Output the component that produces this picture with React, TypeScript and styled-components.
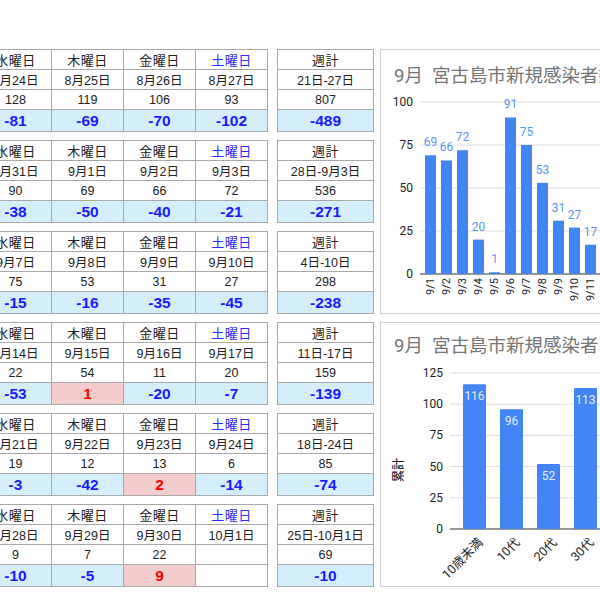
import React from "react";
import styled, { createGlobalStyle } from "styled-components";

type Tone = "neg" | "pos" | "empty";

interface Day {
  date: string;
  count: string;
  diff: string;
  tone: Tone;
}

interface Week {
  days: Day[];
  range: string;
  total: string;
  diff: string;
}

const DAY_NAMES = ["水曜日", "木曜日", "金曜日", "土曜日"];

const d = (date: string, count: string, diff: string, tone: Tone = "neg"): Day => ({
  date,
  count,
  diff,
  tone,
});

const WEEKS: Week[] = [
  {
    days: [d("8月24日", "128", "-81"), d("8月25日", "119", "-69"), d("8月26日", "106", "-70"), d("8月27日", "93", "-102")],
    range: "21日-27日",
    total: "807",
    diff: "-489",
  },
  {
    days: [d("8月31日", "90", "-38"), d("9月1日", "69", "-50"), d("9月2日", "66", "-40"), d("9月3日", "72", "-21")],
    range: "28日-9月3日",
    total: "536",
    diff: "-271",
  },
  {
    days: [d("9月7日", "75", "-15"), d("9月8日", "53", "-16"), d("9月9日", "31", "-35"), d("9月10日", "27", "-45")],
    range: "4日-10日",
    total: "298",
    diff: "-238",
  },
  {
    days: [d("9月14日", "22", "-53"), d("9月15日", "54", "1", "pos"), d("9月16日", "11", "-20"), d("9月17日", "20", "-7")],
    range: "11日-17日",
    total: "159",
    diff: "-139",
  },
  {
    days: [d("9月21日", "19", "-3"), d("9月22日", "12", "-42"), d("9月23日", "13", "2", "pos"), d("9月24日", "6", "-14")],
    range: "18日-24日",
    total: "85",
    diff: "-74",
  },
  {
    days: [d("9月28日", "9", "-10"), d("9月29日", "7", "-5"), d("9月30日", "22", "9", "pos"), d("10月1日", "", "", "empty")],
    range: "25日-10月1日",
    total: "69",
    diff: "-10",
  },
];

// 9月 日別
const DAILY = [69, 66, 72, 20, 1, 91, 75, 53, 31, 27, 17, 30, 22, 54];
// 年代別 累計
const AGES = [
  { label: "10歳未満", value: 116 },
  { label: "10代", value: 96 },
  { label: "20代", value: 52 },
  { label: "30代", value: 113 },
];

const DailyChart = () => {
  const zero = 188;
  const scale = 1.72;
  return (
    <ChartSvg width={260} height={227}>
      {[0, 25, 50, 75, 100].map((t) => (
        <g key={t}>
          <line
            x1={39}
            x2={260}
            y1={zero - t * scale}
            y2={zero - t * scale}
            stroke={t === 0 ? "#333" : "#dcdcdc"}
            strokeWidth={1}
          />
          <AxisText x={32} y={zero - t * scale} textAnchor="end" dominantBaseline="central">
            {t}
          </AxisText>
        </g>
      ))}
      {DAILY.map((v, i) => {
        const x = 44 + i * 16;
        const top = zero - v * scale;
        return (
          <g key={i}>
            <rect x={x} y={top} width={11} height={v * scale} fill="#4285f4" />
            <BarLabel x={x + 5.5} y={top - 13} textAnchor="middle" dominantBaseline="central">
              {v}
            </BarLabel>
            <TickText
              x={x + 5.5}
              y={zero + 4}
              textAnchor="end"
              dominantBaseline="central"
              transform={`rotate(-90 ${x + 5.5} ${zero + 4})`}
            >
              {`9/${i + 1}`}
            </TickText>
          </g>
        );
      })}
    </ChartSvg>
  );
};

const AgeChart = () => {
  const zero = 170;
  const scale = 1.248;
  return (
    <ChartSvg width={260} height={227}>
      <AxisTitle x={18} y={111} textAnchor="middle" dominantBaseline="central" transform="rotate(-90 18 111)">
        累計
      </AxisTitle>
      {[0, 25, 50, 75, 100, 125].map((t) => (
        <g key={t}>
          <line
            x1={69}
            x2={260}
            y1={zero - t * scale}
            y2={zero - t * scale}
            stroke={t === 0 ? "#333" : "#dcdcdc"}
            strokeWidth={1}
          />
          <AxisText x={62} y={zero - t * scale} textAnchor="end" dominantBaseline="central">
            {t}
          </AxisText>
        </g>
      ))}
      {AGES.map((a, i) => {
        const x = 82 + i * 37;
        const top = zero - a.value * scale;
        const cx = x + 11.5;
        return (
          <g key={a.label}>
            <rect x={x} y={top} width={23} height={a.value * scale} rx={1} fill="#4285f4" />
            <InnerLabel x={cx} y={top + 12} textAnchor="middle" dominantBaseline="central">
              {a.value}
            </InnerLabel>
            <AgeText
              x={cx + 6}
              y={zero + 11}
              textAnchor="end"
              dominantBaseline="central"
              transform={`rotate(-45 ${cx + 6} ${zero + 11})`}
            >
              {a.label}
            </AgeText>
          </g>
        );
      })}
    </ChartSvg>
  );
};

const App = () => {
  return (
    <>
      <GlobalStyle />
      <Page>
        <TableColumn>
          {WEEKS.map((w) => (
            <WeekRow key={w.range}>
              <DayGrid>
                {DAY_NAMES.map((n, i) => (
                  <HeadCell key={n} $sat={i === 3}>
                    {n}
                  </HeadCell>
                ))}
                {w.days.map((day) => (
                  <Cell key={day.date}>{day.date}</Cell>
                ))}
                {w.days.map((day) => (
                  <Cell key={day.date + "c"}>{day.count}</Cell>
                ))}
                {w.days.map((day) => (
                  <DiffCell key={day.date + "d"} $tone={day.tone}>
                    {day.diff}
                  </DiffCell>
                ))}
              </DayGrid>
              <WeekGrid>
                <HeadCell>週計</HeadCell>
                <Cell>{w.range}</Cell>
                <Cell>{w.total}</Cell>
                <DiffCell $tone="neg">{w.diff}</DiffCell>
              </WeekGrid>
            </WeekRow>
          ))}
        </TableColumn>
        <ChartColumn>
          <ChartCard>
            <ChartTitle>9月  宮古島市新規感染者数</ChartTitle>
            <DailyChart />
          </ChartCard>
          <ChartCard>
            <ChartTitle $top={12}>9月  宮古島市新規感染者 年代別</ChartTitle>
            <AgeChart />
          </ChartCard>
        </ChartColumn>
      </Page>
    </>
  );
};

const GlobalStyle = createGlobalStyle`
  body {
    margin: 0;
    background: #ffffff;
    overflow: hidden;
    font-family: "Liberation Sans", "Noto Sans CJK JP", sans-serif;
  }
`;

const Page = styled.div`
  display: flex;
  align-items: flex-start;
  width: 600px;
  height: 600px;
  padding-top: 49px;
  box-sizing: border-box;
  overflow: hidden;
`;

const TableColumn = styled.div`
  display: flex;
  flex-direction: column;
  gap: 8px;
  margin-left: -21px;
  flex: none;
`;

const WeekRow = styled.div`
  display: flex;
  gap: 9px;
`;

const DayGrid = styled.div`
  display: grid;
  grid-template-columns: repeat(4, 71px);
  grid-template-rows: 19px 19px 19px 21px;
  gap: 1px;
  border: 1px solid #a8a8a8;
  background: #a8a8a8;
`;

const WeekGrid = styled(DayGrid)`
  grid-template-columns: 95px;
`;

const Cell = styled.div`
  display: flex;
  align-items: center;
  justify-content: center;
  background: #ffffff;
  color: #222222;
  font-size: 12.5px;
  white-space: nowrap;
  overflow: hidden;
`;

const HeadCell = styled(Cell)<{ $sat?: boolean }>`
  font-size: 13px;
  color: ${(p) => (p.$sat ? "#2b2bff" : "#222222")};
  letter-spacing: 0.5px;
`;

const DiffCell = styled(Cell)<{ $tone: Tone }>`
  font-size: 15.5px;
  font-weight: bold;
  background: ${(p) => (p.$tone === "pos" ? "#f4cccc" : p.$tone === "empty" ? "#ffffff" : "#d4effb")};
  color: ${(p) => (p.$tone === "pos" ? "#ff0000" : "#1a1aff")};
`;

const ChartColumn = styled.div`
  display: flex;
  flex-direction: column;
  gap: 8px;
  margin-left: 6px;
  flex: none;
`;

const ChartCard = styled.div`
  width: 260px;
  height: 265px;
  box-sizing: border-box;
  border: 1px solid #cfcfcf;
  background: #ffffff;
  overflow: hidden;
`;

const ChartTitle = styled.div<{ $top?: number }>`
  height: 36px;
  box-sizing: border-box;
  padding: ${(p) => p.$top ?? 15}px 0 0 13px;
  font-family: Roboto, "Noto Sans CJK JP", sans-serif;
  font-size: 18.5px;
  line-height: 22px;
  color: #757575;
  white-space: pre;
`;

const ChartSvg = styled.svg`
  display: block;
`;

const AxisText = styled.text`
  font-family: Roboto, "Noto Sans CJK JP", sans-serif;
  font-size: 12px;
  fill: #222222;
`;

const TickText = styled(AxisText)`
  font-size: 11px;
`;

const AgeText = styled(AxisText)`
  font-size: 12.5px;
`;

const AxisTitle = styled(AxisText)`
  font-weight: 500;
`;

const BarLabel = styled.text`
  font-family: Roboto, "Noto Sans CJK JP", sans-serif;
  font-size: 12px;
  fill: #5b95f5;
`;

const InnerLabel = styled(BarLabel)`
  fill: #e6eefe;
`;

export default App;
